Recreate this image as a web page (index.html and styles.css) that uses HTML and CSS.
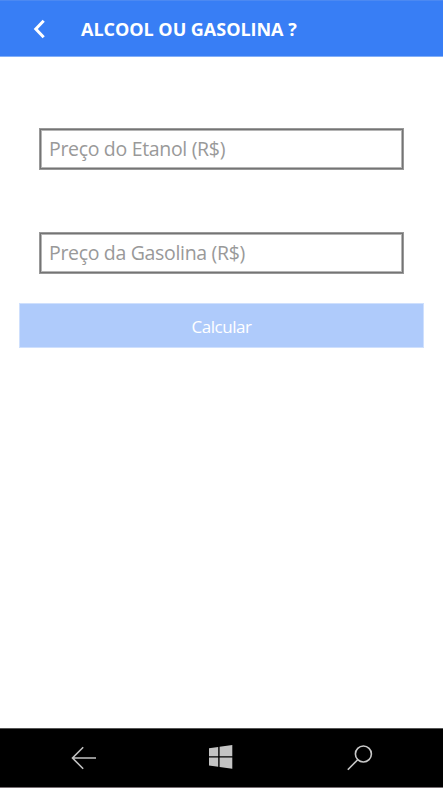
FILE: index.html
```html
<!DOCTYPE html>
<html lang="pt-BR">
<head>
<meta charset="utf-8">
<title>Alcool ou Gasolina ?</title>
<link rel="stylesheet" href="styles.css">
</head>
<body>
<div class="screen">
  <header class="header">
    <svg class="back" width="14" height="20" viewBox="0 0 14 20"><path d="M10.7 1.8 2.8 10l7.9 8.2" fill="none" stroke="#fff" stroke-width="3"/></svg>
    <h1 class="title">ALCOOL OU GASOLINA ?</h1>
  </header>
  <main class="form">
    <input class="field" type="text" placeholder="Preço do Etanol (R$)">
    <input class="field field-gas" type="text" placeholder="Preço da Gasolina (R$)">
    <button class="submit" disabled>Calcular</button>
  </main>
  <nav class="navbar">
    <svg class="nav-back" width="26" height="24" viewBox="0 0 26 24"><path d="M12.2 1.2 1.5 12l10.7 10.8M1.5 12H25" fill="none" stroke="#c2c2c2" stroke-width="1.6"/></svg>
    <svg class="nav-home" width="24" height="24" viewBox="0 0 24 24"><path d="M0 3.3 9.2 2v9.2H0zM10.6 1.8 23.3 0v11.2H10.6zM0 12.5h9.2v9.2L0 20.5zM10.6 12.5h12.7v11.2l-12.7-1.8z" fill="#c4c4c4"/></svg>
    <svg class="nav-search" width="26" height="26" viewBox="0 0 26 26"><g fill="none" stroke="#c8c8c8" stroke-width="1.6"><circle cx="16.4" cy="9" r="8"/><path d="M10.7 14.7.8 24.7"/></g></svg>
  </nav>
</div>
</body>
</html>
```
FILE: styles.css
```css
* { box-sizing: border-box; }
body {
  margin: 0;
  background: #fff;
  font-family: "Open Sans", "Noto Sans", sans-serif;
}
.screen {
  width: 443px;
  height: 788px;
  display: flex;
  flex-direction: column;
}
.header {
  height: 57px;
  flex: none;
  display: flex;
  align-items: center;
  padding-left: 33px;
  background: #387ef5;
  border-top: 1px solid #4c89f2;
  border-bottom: 1px solid #82aff8;
}
.back { display: block; }
.title {
  margin: 0 0 0 34px;
  color: #fff;
  font-size: 18px;
  font-weight: 700;
  line-height: 24px;
  letter-spacing: -0.03px;
  white-space: nowrap;
}
.form {
  flex: 1;
  display: flex;
  flex-direction: column;
  padding: 71px 19px 0;
}
.field {
  height: 42px;
  margin: 0 20px;
  padding: 0 9px 2px;
  border: 1px solid #999;
  border-radius: 0;
  box-shadow: inset 0 0 0 1px #747474, inset 0 0 0 2px #b5b5b5;
  background: #fff;
  color: #333;
  font: 400 19.5px/27px "Open Sans", "Noto Sans", sans-serif;
  letter-spacing: -0.32px;
  outline: none;
}
.field::placeholder { color: #999; opacity: 1; }
.field-gas { margin-top: 62px; }
.submit {
  height: 45px;
  margin: 29px 0 0;
  padding: 3px 0 0;
  border: 1px solid #cfe0fd;
  background: #afcbfb;
  color: #fff;
  font: 400 17px/24px "Open Sans", "Noto Sans", sans-serif;
  letter-spacing: -0.45px;
}
.navbar {
  height: 60px;
  flex: none;
  display: flex;
  align-items: flex-start;
  padding-left: 71px;
  background: #000;
  border-top: 1px solid #555;
  border-bottom: 1px solid #776f73;
}
.nav-back { margin-top: 17px; }
.nav-home { margin: 16px 0 0 112px; }
.nav-search { margin: 16px 0 0 114px; }
```
